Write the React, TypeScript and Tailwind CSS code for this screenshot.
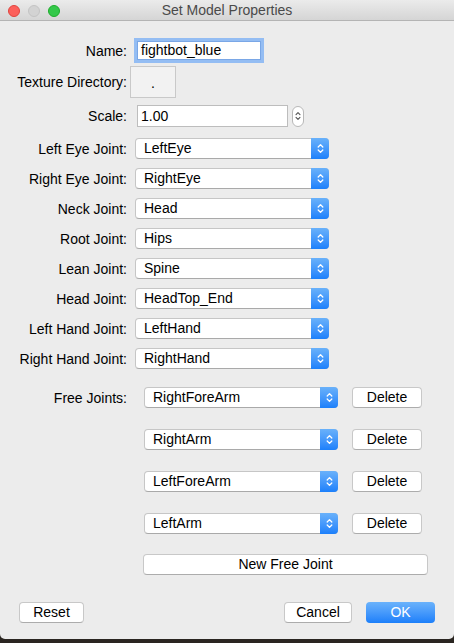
import React from 'react';

const font = { fontFamily: '"Liberation Sans", Arial, sans-serif' };

const UpDown = ({ color = 'white', w = 7, h = 11 }: { color?: string; w?: number; h?: number }) => (
  <svg width={w} height={h} viewBox="0 0 7 11" fill="none" stroke={color} strokeWidth="1.3" strokeLinecap="round" strokeLinejoin="round">
    <path d="M1.2 4 L3.5 1.6 L5.8 4" />
    <path d="M1.2 7 L3.5 9.4 L5.8 7" />
  </svg>
);

const Select = ({ value, className = '' }: { value: string; className?: string }) => (
  <div className={`flex h-[21px] w-[194px] items-stretch rounded-[4px] border border-[#c6c6c6] border-b-[#a9a9a9] bg-white ${className}`}>
    <div className="flex flex-1 items-center pl-[8px] text-[14px] text-black">{value}</div>
    <div className="-my-px -mr-px flex w-[18px] items-center justify-center rounded-r-[4px] bg-gradient-to-b from-[#69b1fa] to-[#1b80fb]">
      <UpDown />
    </div>
  </div>
);

const Button = ({ label, className = '' }: { label: string; className?: string }) => (
  <div className={`flex h-[21px] items-center justify-center rounded-[4px] border border-[#c8c8c8] border-b-[#acacac] bg-white text-[14px] text-black ${className}`}>
    {label}
  </div>
);

const Label = ({ text }: { text: string }) => (
  <div className="w-[128px] shrink-0 pr-[1px] text-right text-[14px] leading-[18px] text-black">{text}</div>
);

const joints: [string, string][] = [
  ['Left Eye Joint:', 'LeftEye'],
  ['Right Eye Joint:', 'RightEye'],
  ['Neck Joint:', 'Head'],
  ['Root Joint:', 'Hips'],
  ['Lean Joint:', 'Spine'],
  ['Head Joint:', 'HeadTop_End'],
  ['Left Hand Joint:', 'LeftHand'],
  ['Right Hand Joint:', 'RightHand'],
];

const freeJoints = ['RightForeArm', 'RightArm', 'LeftForeArm', 'LeftArm'];

export default function App() {
  return (
    <div className="h-[643px] w-[454px] overflow-hidden bg-[#2a2521]" style={font}>
      <div className="flex h-[639px] w-[454px] flex-col rounded-b-[5px] bg-[#ececec]">
        {/* title bar */}
        <div className="relative flex h-[21px] shrink-0 items-center justify-center border-b border-[#b4b4b4] bg-gradient-to-b from-[#ebebeb] to-[#d5d5d5]">
          <div className="absolute left-[8px] top-[5px] flex gap-[8px]">
            <div className="h-[12px] w-[12px] rounded-full border border-[#e0443e] bg-[#fc605b]" />
            <div className="h-[12px] w-[12px] rounded-full border border-[#c4c4c4] bg-[#d3d3d3]" />
            <div className="h-[12px] w-[12px] rounded-full border border-[#1dad2b] bg-[#34c84a]" />
          </div>
          <span className="text-[14px] text-[#4a4a4a]">Set Model Properties</span>
        </div>

        {/* name */}
        <div className="mt-[20px] flex items-center">
          <Label text="Name:" />
          <div className="ml-[9px] flex h-[19px] w-[124px] items-center border border-[#7aa7e6] bg-white pl-[3px] text-[14px] text-black ring-[3px] ring-[#94bdf3]">
            fightbot_blue
          </div>
        </div>

        {/* texture dir */}
        <div className="mt-[6px] flex items-center">
          <Label text="Texture Directory:" />
          <div className="ml-[2px] flex h-[32px] w-[46px] items-center justify-center border border-[#c9c9c9] bg-[#f2f2f2] pt-[2px] text-[14px] text-black">
            .
          </div>
        </div>

        {/* scale */}
        <div className="mt-[7px] flex items-center">
          <Label text="Scale:" />
          <div className="ml-[9px] flex h-[22px] w-[151px] items-center border border-[#bdbdbd] bg-white pl-[3px] text-[14px] text-black">
            1.00
          </div>
          <div className="ml-[4px] flex h-[21px] w-[12px] items-center justify-center rounded-full border border-[#b8b8b8] bg-white">
            <UpDown color="#555" w={6} h={10} />
          </div>
        </div>

        {/* joints */}
        <div className="mt-[11px] flex flex-col gap-[9px]">
          {joints.map(([label, value]) => (
            <div key={label} className="flex items-center">
              <Label text={label} />
              <Select value={value} className="ml-[7px]" />
            </div>
          ))}
        </div>

        {/* free joints */}
        <div className="mt-[18px] flex">
          <div className="flex h-[21px] items-center">
            <Label text="Free Joints:" />
          </div>
          <div className="ml-[16px] flex flex-col gap-[21px]">
            {freeJoints.map((j) => (
              <div key={j} className="flex items-center">
                <Select value={j} />
                <Button label="Delete" className="ml-[14px] w-[70px]" />
              </div>
            ))}
          </div>
        </div>

        <div className="mt-[20px] flex">
          <Button label="New Free Joint" className="ml-[143px] w-[285px]" />
        </div>

        {/* footer */}
        <div className="mt-[27px] flex items-center px-[19px]">
          <Button label="Reset" className="w-[65px]" />
          <div className="flex-1" />
          <Button label="Cancel" className="w-[68px]" />
          <div className="ml-[14px] flex h-[21px] w-[69px] items-center justify-center rounded-[4px] bg-gradient-to-b from-[#6ab2fb] to-[#1a7ffa] text-[14px] text-white">
            OK
          </div>
        </div>
      </div>
    </div>
  );
}
